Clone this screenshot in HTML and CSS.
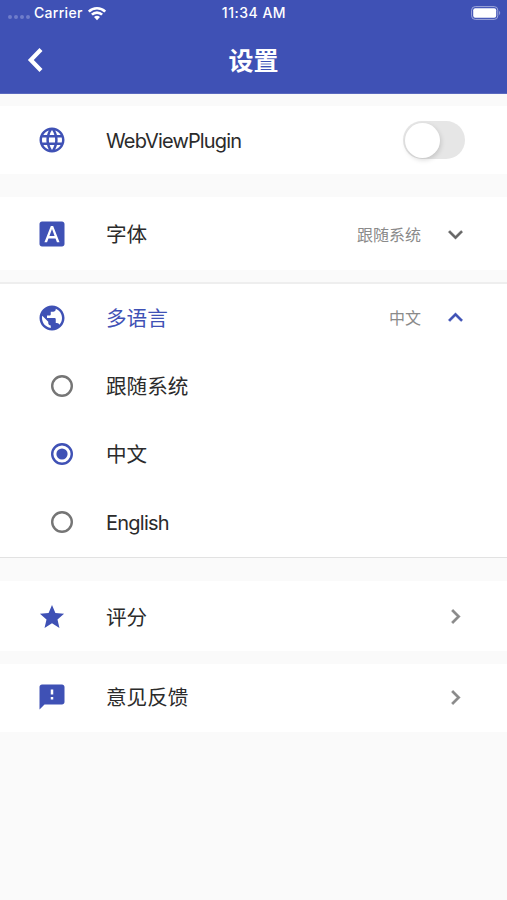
FILE: index.html
```
<!DOCTYPE html>
<html lang="zh-CN">
<head>
    <meta charset="UTF-8">
    <title>设置</title>
    <link rel="stylesheet" href="styles.css">
</head>
<body>
    <header class="header">
        <div class="status">
            <div class="carrier">
                <span class="dots"><i></i><i></i><i></i><i></i></span>
                <span class="carrier-name">Carrier</span>
                <svg class="wifi" viewBox="0 0 20 15">
                    <path d="M1.8 5.6a11.6 11.6 0 0 1 16.4 0M4.9 8.7a7.2 7.2 0 0 1 10.2 0" fill="none" stroke="#fff" stroke-width="2.6"/>
                    <path d="M10 14.3l-3-3.2a4.3 4.3 0 0 1 6 0z" fill="#fff"/>
                </svg>
            </div>
            <span class="time">11:34 AM</span>
            <svg class="battery" viewBox="0 0 30 14">
                <rect x=".6" y=".6" width="26.2" height="12.8" rx="3.6" fill="none" stroke="#9fa8da"/>
                <rect x="2.2" y="2.2" width="23" height="9.6" rx="2" fill="#fff"/>
                <path d="M28.2 4.8q2 2.2 0 4.4z" fill="#9fa8da"/>
            </svg>
        </div>
        <div class="navbar">
            <svg class="back" viewBox="0 0 16 24"><path d="M14 1.5L3.8 12 14 22.5" fill="none" stroke="#fff" stroke-width="4.2"/></svg>
            <h1 class="title">设置</h1>
        </div>
    </header>

    <main>
        <div class="row row-webview">
            <svg class="icon" viewBox="0 0 24 24"><path d="M11.99 2C6.47 2 2 6.48 2 12s4.47 10 9.99 10C17.52 22 22 17.52 22 12S17.52 2 11.99 2zm6.93 6h-2.95c-.32-1.25-.78-2.45-1.38-3.56 1.84.63 3.37 1.91 4.33 3.56zM12 4.04c.83 1.2 1.48 2.53 1.91 3.96h-3.82c.43-1.43 1.08-2.76 1.91-3.96zM4.26 14C4.1 13.36 4 12.69 4 12s.1-1.36.26-2h3.38c-.08.66-.14 1.32-.14 2s.06 1.34.14 2H4.26zm.82 2h2.95c.32 1.25.78 2.45 1.38 3.56-1.84-.63-3.37-1.9-4.33-3.56zm2.95-8H5.08c.96-1.66 2.49-2.93 4.33-3.56C8.81 5.55 8.35 6.75 8.03 8zM12 19.96c-.83-1.2-1.48-2.53-1.91-3.96h3.82c-.43 1.43-1.08 2.76-1.91 3.96zM14.34 14H9.66c-.09-.66-.16-1.32-.16-2s.07-1.35.16-2h4.68c.09.65.16 1.32.16 2s-.07 1.34-.16 2zm.25 5.56c.6-1.11 1.06-2.31 1.38-3.56h2.95c-.96 1.65-2.49 2.93-4.33 3.56zM16.36 14c.08-.66.14-1.32.14-2s-.06-1.34-.14-2h3.38c.16.64.26 1.31.26 2s-.1 1.36-.26 2h-3.38z"/></svg>
            <span class="label latin">WebViewPlugin</span>
            <span class="switch"><span class="thumb"></span></span>
        </div>

        <div class="row row-font">
            <svg class="icon" viewBox="0 0 24 24"><path d="M9.93 13.5h4.14L12 7.98zM20 2H4c-1.1 0-2 .9-2 2v16c0 1.1.9 2 2 2h16c1.1 0 2-.9 2-2V4c0-1.1-.9-2-2-2zm-4.05 16.5l-1.14-3H9.17l-1.12 3H5.96l5.11-13h1.86l5.11 13h-2.09z"/></svg>
            <span class="label">字体</span>
            <span class="value">跟随系统</span>
            <svg class="arrow" viewBox="0 0 24 24"><path d="M16.59 8.59L12 13.17 7.41 8.59 6 10l6 6 6-6z"/></svg>
        </div>

        <!-- 多语言，展开状态 -->
        <div class="group">
            <div class="row group-head">
                <svg class="icon" viewBox="0 0 24 24"><path d="M12 2C6.48 2 2 6.48 2 12s4.48 10 10 10 10-4.48 10-10S17.52 2 12 2zm-1 17.93c-3.95-.49-7-3.85-7-7.93 0-.62.08-1.21.21-1.79L9 15v1c0 1.1.9 2 2 2v1.93zm6.9-2.54c-.26-.81-1-1.39-1.9-1.39h-1v-3c0-.55-.45-1-1-1H8v-2h2c.55 0 1-.45 1-1V7h2c1.1 0 2-.9 2-2v-.41c2.93 1.19 5 4.06 5 7.41 0 2.08-.8 3.97-2.1 5.39z"/></svg>
                <span class="label active">多语言</span>
                <span class="value">中文</span>
                <svg class="arrow arrow-open" viewBox="0 0 24 24"><path d="M12 8l-6 6 1.41 1.41L12 10.83l4.59 4.58L18 14z"/></svg>
            </div>
            <div class="row option">
                <svg class="radio" viewBox="0 0 22 22"><circle cx="11" cy="11" r="9.8"/></svg>
                <span class="label">跟随系统</span>
            </div>
            <div class="row option">
                <svg class="radio checked" viewBox="0 0 22 22"><circle cx="11" cy="11" r="9.8"/><circle class="dot" cx="11" cy="11" r="5.6"/></svg>
                <span class="label">中文</span>
            </div>
            <div class="row option">
                <svg class="radio" viewBox="0 0 22 22"><circle cx="11" cy="11" r="9.8"/></svg>
                <span class="label latin latin-option">English</span>
            </div>
        </div>

        <div class="row row-rate">
            <svg class="icon icon-star" viewBox="0 0 24 24"><path d="M12 17.27L18.18 21l-1.64-7.03L22 9.24l-7.19-.61L12 2 9.19 8.63 2 9.24l5.46 4.73L5.82 21z"/></svg>
            <span class="label">评分</span>
            <svg class="arrow arrow-link" viewBox="0 0 24 24"><path d="M10 6L8.59 7.41 13.17 12l-4.58 4.59L10 18l6-6z"/></svg>
        </div>

        <div class="row row-feedback">
            <svg class="icon" viewBox="0 0 24 24"><path d="M20 2H4c-1.1 0-1.99.9-1.99 2L2 22l4-4h14c1.1 0 2-.9 2-2V4c0-1.1-.9-2-2-2zm-7 12h-2v-2h2v2zm0-4h-2V6h2v4z"/></svg>
            <span class="label">意见反馈</span>
            <svg class="arrow arrow-link" viewBox="0 0 24 24"><path d="M10 6L8.59 7.41 13.17 12l-4.58 4.59L10 18l6-6z"/></svg>
        </div>
    </main>
</body>
</html>
```
FILE: styles.css
```
* {
    box-sizing: border-box;
}
body {
    margin: 0;
    min-height: 900px;
    background: #fafafa;
    color: #2b2b2b;
    font-family: Inter, "Noto Sans CJK SC", sans-serif;
}
svg {
    display: block;
    flex: none;
}
.header {
    height: 94px;
    background: #3f51b5;
    border-bottom: 1px solid #5a69bf;
    color: #fff;
}
.status {
    display: grid;
    grid-template-columns: 1fr auto 1fr;
    align-items: center;
    height: 26px;
    padding: 0 6px 0 8px;
    font-size: 14px;
    line-height: 20px;
    font-weight: 500;
    letter-spacing: 0.3px;
}
.time {
    margin-right: 1px;
    letter-spacing: 0.5px;
}
.carrier {
    display: flex;
    align-items: center;
}
.dots {
    display: flex;
    gap: 2px;
    width: 26px;
    padding-top: 8px;
}
.dots i {
    width: 4px;
    height: 4px;
    border-radius: 50%;
    background: #6f7dca;
}
.wifi {
    width: 20px;
    height: 15px;
    margin-left: 4px;
}
.battery {
    width: 30px;
    height: 14px;
    justify-self: end;
}
.navbar {
    display: grid;
    grid-template-columns: 1fr auto 1fr;
    align-items: center;
    height: 67px;
    padding: 0 27px;
}
.back {
    width: 16px;
    height: 24px;
}
.title {
    margin: 0;
    padding-top: 2px;
    font-size: 25px;
    line-height: 36px;
    font-weight: 600;
}
.row {
    display: flex;
    align-items: center;
    height: 69px;
    padding: 0 37px;
    background: #fff;
}
.row-webview {
    margin-top: 12px;
    height: 68px;
}
.row-font {
    margin-top: 23px;
    height: 73px;
    padding-top: 1px;
}
.row-font .value {
    padding-top: 2px;
}
.group {
    margin-top: 12px;
    height: 276px;
    background: #fff;
    border-top: 2px solid #eee;
    border-bottom: 1px solid #e2e2e2;
}
.group .row {
    height: 68.4px;
}
.group .group-head {
    height: 67px;
}
.row-rate {
    margin-top: 23px;
    height: 70px;
    padding-top: 1px;
}
.row-feedback {
    margin-top: 13px;
    height: 68px;
    padding-bottom: 2px;
}
.icon {
    width: 30px;
    height: 30px;
    margin-right: 39px;
    fill: #3f51b5;
}
.icon-star {
    padding: 0.5px;
}
.label {
    flex: 1;
    padding-top: 2px;
    font-size: 20.6px;
    line-height: 30px;
}
.latin {
    padding-top: 1px;
    font-size: 20px;
    letter-spacing: -0.85px;
}
.latin-option {
    letter-spacing: -0.75px;
}
.active {
    color: #3f51b5;
}
.value {
    margin-right: 20px;
    color: #8a8a8a;
    font-size: 16px;
    line-height: 24px;
}
.arrow {
    width: 29px;
    height: 29px;
    fill: #666;
    stroke: #666;
    stroke-width: 0.3;
}
.arrow-open {
    fill: #3f51b5;
    stroke: #3f51b5;
}
.arrow-link {
    fill: #8a8a8a;
    stroke: #8a8a8a;
}
.group .option {
    padding-top: 1px;
    padding-left: 51px;
}
.radio {
    width: 22px;
    height: 22px;
    margin-right: 33px;
    fill: none;
    stroke: #757575;
    stroke-width: 2.4;
}
.checked {
    stroke: #3f51b5;
}
.radio .dot {
    fill: #3f51b5;
    stroke: none;
}
.switch {
    width: 62px;
    height: 38px;
    margin-right: 5px;
    padding: 1.5px;
    border-radius: 19px;
    background: #e6e6e6;
}
.thumb {
    display: block;
    width: 35px;
    height: 35px;
    border-radius: 50%;
    background: #fff;
    box-shadow: 1px 2px 5px rgba(0,0,0,0.15);
}
```
